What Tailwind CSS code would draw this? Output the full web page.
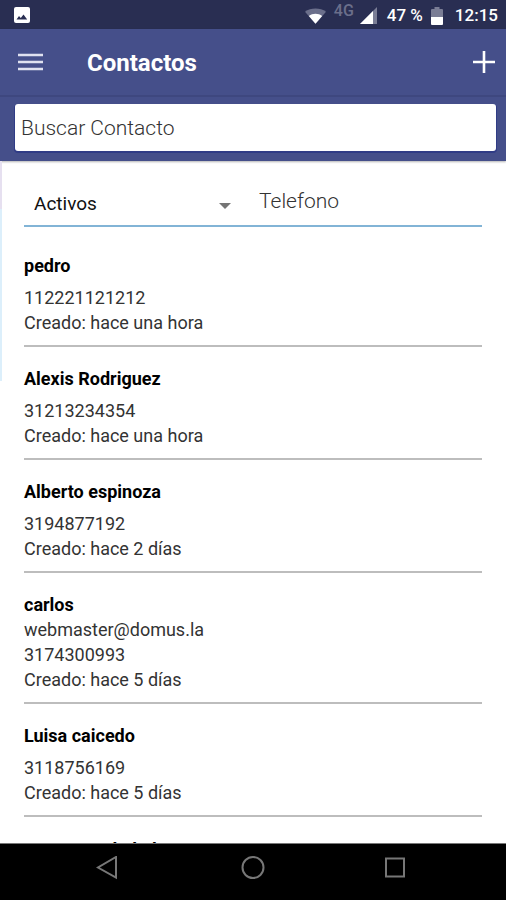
<!DOCTYPE html>
<html lang="es">
<head>
<meta charset="utf-8">
<meta name="viewport" content="width=device-width, initial-scale=1">
<title>Contactos</title>
<script src="https://cdn.jsdelivr.net/npm/@tailwindcss/browser@4"></script>
</head>
<body class="flex h-screen flex-col overflow-hidden bg-white font-[Roboto,sans-serif] text-black">
  <div class="flex h-[29px] shrink-0 items-center justify-between bg-[#292e52] pl-3.5 pr-2 text-white">
    <svg class="size-4" viewBox="0 0 16 16"><rect width="16" height="16" rx="2" fill="#fff"/><path d="M2.500 12.500l2.500-3.500 1.800 2 2.700-3.500 3.700 5z" fill="#292e52"/></svg>
    <div class="flex items-center pt-0.5 text-[17px] font-medium">
      <svg class="h-4 w-[21px]" viewBox="0 0 22 16"><path d="M0 3.500C6-1 16-1 22 3.500L11 16z" fill="#6b6f8b"/><path d="M4 8c4-3 10-3 14 0l-7 8z" fill="#fff"/></svg>
      <span class="ml-2 self-start text-base leading-4 text-[#6b6f8b]">4G</span>
      <svg class="ml-1.5 size-[17px]" viewBox="0 0 17 17"><path d="M17 0v17H0z" fill="#7a7d95"/><path d="M13 4v13H0z" fill="#fff"/></svg>
      <span class="ml-2.5">47 %</span>
      <svg class="ml-2 h-[18px] w-3" viewBox="0 0 12 18"><path d="M3.500 0h5v2H11q1 0 1 1v7H0V3q0-1 1-1h2.500z" fill="#7a7d95"/><path d="M0 10h12v7q0 1-1 1H1q-1 0-1-1z" fill="#fff"/></svg>
      <span class="ml-3">12:15</span>
    </div>
  </div>

  <header class="shrink-0 bg-[#454f8a] text-white shadow-[0_1px_2px_rgba(0,0,0,0.3)]">
    <div class="flex h-[68px] items-center border-b-2 border-[#3e477f] pl-[18px] pr-[11px]">
      <button type="button" aria-label="Menú"><svg class="h-[18px] w-[25px]" viewBox="0 0 25 18"><path d="M0 2h25M0 9h25M0 16h25" stroke="#dfe1f0" stroke-width="2.400"/></svg></button>
      <h1 class="ml-11 flex-1 pt-0.5 text-[24px] font-bold">Contactos</h1>
      <button type="button" aria-label="Agregar contacto"><svg class="size-[22px]" viewBox="0 0 22 22"><path d="M11 0v22M0 11h22" stroke="#fff" stroke-width="2.600"/></svg></button>
    </div>
    <div class="px-2.5 pb-2.5 pl-[15px] pt-[7px]">
      <input type="search" aria-label="Buscar Contacto" placeholder="Buscar Contacto" class="block h-[47px] w-full rounded-[3px] bg-white px-1.5 text-[21px] font-light text-black shadow-[0_1px_0_1px_#303c86] outline-none placeholder:text-[#333333]">
    </div>
  </header>

  <main class="relative min-h-0 flex-1 overflow-hidden px-6">
    <div class="absolute left-0 top-0 h-12 w-0.5 bg-[#e6e0f0]"></div>
    <div class="absolute left-0 top-12 h-[172px] w-0.5 bg-[#dceffb]"></div>
    <div class="mt-[19px] flex h-[47px] items-center border-b-2 border-[#82b4d6]">
      <div class="relative w-1/2">
        <select aria-label="Estado" class="w-full appearance-none bg-transparent px-2.5 pt-1 text-[19px] text-[#111111] outline-none"><option>Activos</option></select>
        <svg class="pointer-events-none absolute right-[22px] top-1/2 h-1.5 w-3" viewBox="0 0 12 6"><path d="M0 0h12L6 6z" fill="#757575"/></svg>
      </div>
      <input type="tel" aria-label="Telefono" placeholder="Telefono" class="w-1/2 px-1.5 pb-0.5 text-[21px] font-light outline-none placeholder:text-[#333333]">
    </div>
    <ul class="pt-[7px] text-[18px] leading-[25px] text-[#333333]">
      <li class="border-b-2 border-[#bdbdbd] pb-2.5 pt-[19px]"><h2 class="mb-[7px] font-bold text-black">pedro</h2><p>112221121212</p><p>Creado: hace una hora</p></li>
      <li class="border-b-2 border-[#bdbdbd] pb-2.5 pt-[19px]"><h2 class="mb-[7px] font-bold text-black">Alexis Rodriguez</h2><p>31213234354</p><p>Creado: hace una hora</p></li>
      <li class="border-b-2 border-[#bdbdbd] pb-2.5 pt-[19px]"><h2 class="mb-[7px] font-bold text-black">Alberto espinoza</h2><p>3194877192</p><p>Creado: hace 2 días</p></li>
      <li class="border-b-2 border-[#bdbdbd] pb-2.5 pt-[19px]"><h2 class="font-bold text-black">carlos</h2><p>webmaster@domus.la</p><p>3174300993</p><p>Creado: hace 5 días</p></li>
      <li class="border-b-2 border-[#bdbdbd] pb-2.5 pt-[19px]"><h2 class="mb-[7px] font-bold text-black">Luisa caicedo</h2><p>3118756169</p><p>Creado: hace 5 días</p></li>
      <li class="pt-5"><h2 class="font-bold text-black">Ramon Cadadad</h2></li>
    </ul>
  </main>

  <nav class="grid h-[57px] shrink-0 grid-cols-[216px_1fr_222px] border-t border-[#777777] bg-black pt-3">
    <button type="button" aria-label="Atrás" class="flex justify-center"><svg class="size-6" viewBox="0 0 24 24"><path d="M20 1v20.500L2 11.500z" fill="none" stroke="#777777" stroke-width="2"/></svg></button>
    <button type="button" aria-label="Inicio" class="flex justify-center pl-1.5"><svg class="size-6" viewBox="0 0 24 24"><circle cx="12" cy="11.500" r="10.500" fill="none" stroke="#777777" stroke-width="2"/></svg></button>
    <button type="button" aria-label="Recientes" class="flex justify-center"><svg class="size-6" viewBox="0 0 24 24"><path d="M3 2.500h18v18H3z" fill="none" stroke="#777777" stroke-width="2"/></svg></button>
  </nav>
</body>
</html>
